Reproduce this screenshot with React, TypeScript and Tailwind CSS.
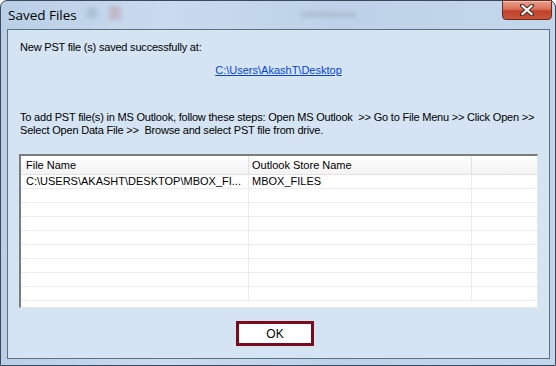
import React from "react";

const rows = [
  ["C:\\USERS\\AKASHT\\DESKTOP\\MBOX_FI...", "MBOX_FILES"],
  ["", ""],
  ["", ""],
  ["", ""],
  ["", ""],
  ["", ""],
  ["", ""],
  ["", ""],
  ["", ""],
];

export default function App() {
  return (
    <div className="w-[556px] h-[366px] bg-white" style={{ fontFamily: '"Liberation Sans", Arial, sans-serif' }}>
      <div className="relative w-[556px] h-[366px] rounded-t-[7px] border border-[#3a4a5c] bg-[linear-gradient(90deg,#b9cfe6_0%,#c9dbee_30%,#bdd2e8_60%,#c3d7ec_100%)] flex flex-col">
        {/* title bar */}
        <div className="h-[28px] flex items-center pl-[7px] relative shrink-0">
          <span className="text-[13.5px] text-black" style={{ fontFamily: '"Open Sans", "Liberation Sans", sans-serif' }}>Saved Files</span>
          <div className="absolute left-[85px] top-[6px] w-[12px] h-[12px] rounded-full bg-[#9fb3cc] blur-[2px] opacity-60" />
          <div className="absolute left-[108px] top-[5px] w-[12px] h-[14px] bg-[#c09aa8] blur-[2px] opacity-50" />
          <div className="absolute left-[300px] top-[11px] w-[55px] h-[5px] bg-[#9aa9ba] blur-[2px] opacity-50" />
          {/* close button */}
          <div className="absolute right-[3px] top-[-1px] w-[50px] h-[20px] rounded-b-[4px] border border-[#6b2a20] bg-[linear-gradient(180deg,#e9a08e_0%,#d9715a_45%,#c2402a_55%,#c8553c_100%)] flex items-center justify-center shadow-[inset_0_1px_0_rgba(255,255,255,0.4)]">
            <svg width="14" height="12" viewBox="0 0 14 12">
              <path d="M2 1.5 L12 10.5 M12 1.5 L2 10.5" stroke="#4a2a25" strokeWidth="4" strokeLinecap="square" />
              <path d="M2.5 2 L11.5 10 M11.5 2 L2.5 10" stroke="#ffffff" strokeWidth="2.2" strokeLinecap="square" />
            </svg>
          </div>
        </div>
        {/* content panel */}
        <div className="ml-[6px] mr-[5px] h-[330px] border border-[#5d6f82] bg-[#d5e4f3] flex flex-col text-[11px] text-black pt-[11px]">
          <div className="pl-[12px] leading-[13px] tracking-[-0.2px] whitespace-nowrap">New PST file (s) saved successfully at:</div>
          <div className="mt-[10px] text-center leading-[13px]">
            <span className="text-[#0645d8] underline">C:\Users\AkashT\Desktop</span>
          </div>
          <div className="mt-[34px] pl-[12px] leading-[13px] tracking-[-0.2px] whitespace-nowrap">
            <div>To add PST file(s) in MS Outlook, follow these steps: Open MS Outlook &nbsp;&gt;&gt; Go to File Menu &gt;&gt; Click Open &gt;&gt;</div>
            <div>Select Open Data File &gt;&gt; &nbsp;Browse and select PST file from drive.</div>
          </div>
          {/* table */}
          <div className="mt-[17px] mx-[11px] h-[154px] border-t-2 border-l-2 border-[#7c7c7c] border-r border-b border-r-[#e6e6e6] border-b-[#e6e6e6] bg-white flex flex-col overflow-hidden">
            <div className="h-[19px] flex bg-[linear-gradient(180deg,#ffffff_0%,#f3f3f3_100%)] border-b border-[#e2e2e2] shrink-0">
              <div className="w-[228px] pl-[5px] flex items-center border-r border-[#e2e2e2]">File Name</div>
              <div className="w-[223px] pl-[3px] flex items-center border-r border-[#e2e2e2]">Outlook Store Name</div>
              <div className="flex-1" />
            </div>
            {rows.map((r, i) => (
              <div key={i} className="h-[14px] flex border-b border-[#ececec] shrink-0">
                <div className="w-[228px] pl-[5px] flex items-center border-r border-[#ececec] whitespace-nowrap overflow-hidden">{r[0]}</div>
                <div className="w-[223px] pl-[3px] flex items-center border-r border-[#ececec]">{r[1]}</div>
                <div className="flex-1" />
              </div>
            ))}
          </div>
          {/* OK button */}
          <div className="flex justify-center mt-[13px] pr-[7px]">
            <button className="w-[78px] h-[25px] border-[3px] border-[#7a0a1c] bg-white text-[12px] text-black flex items-center justify-center">OK</button>
          </div>
        </div>
      </div>
    </div>
  );
}
